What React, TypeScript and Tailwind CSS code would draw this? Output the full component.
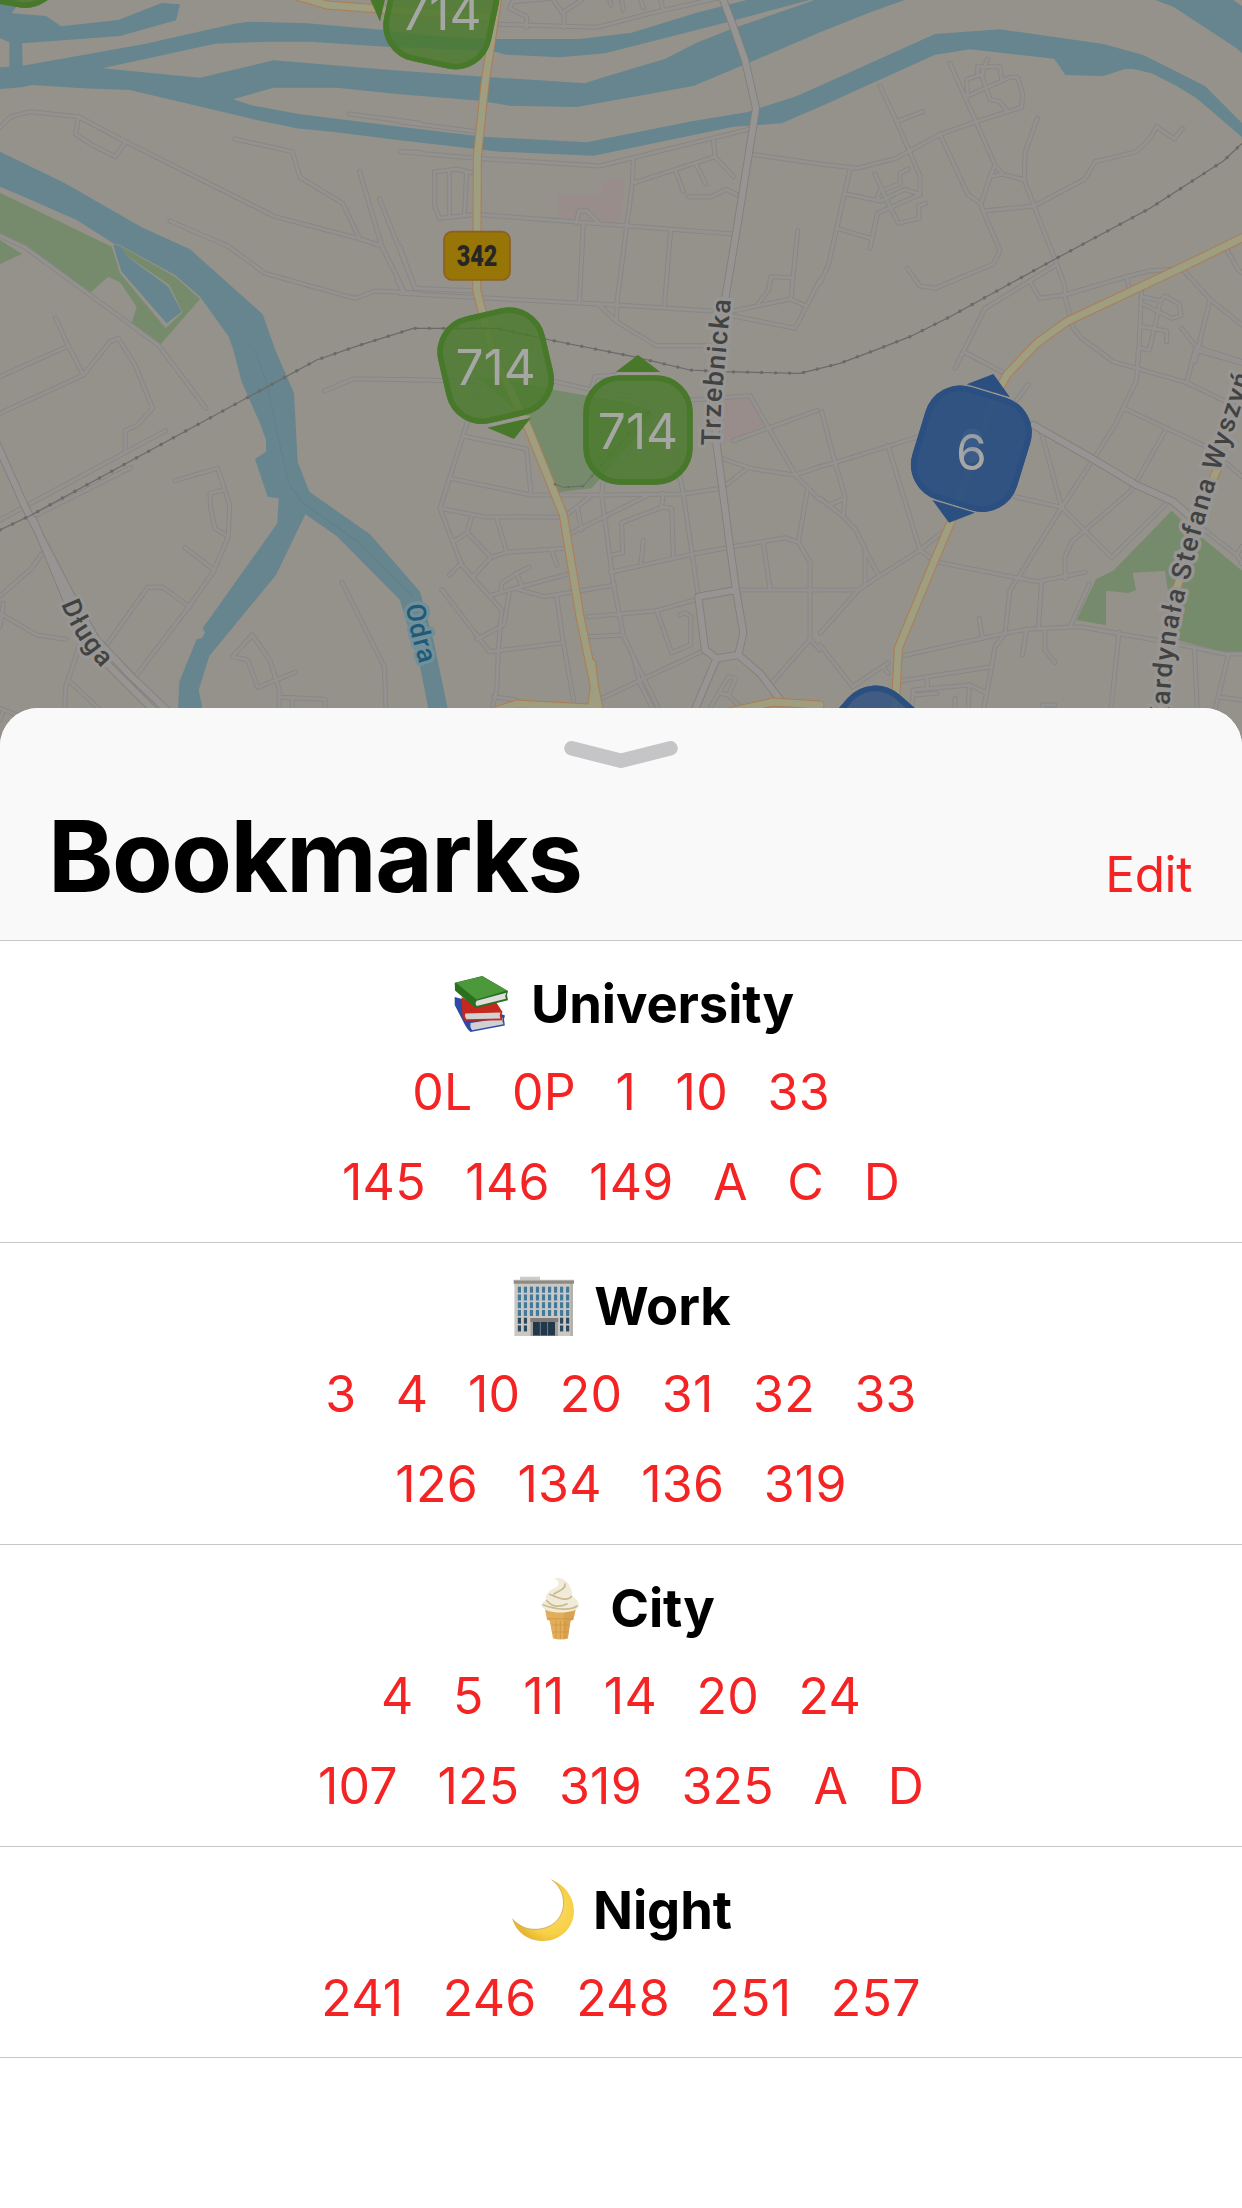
import React from "react";

/* ---------- Map data (units are thirds of a CSS pixel) ---------- */

type Tile = { at: string; roads: string[] };

const minorRoads: Tile[] = [
  {
    at: "translate(0 0)",
    roads: [
      "0,382 32,350 92,335 235,350 377,425 825,650 1075,715 1145,738 1213,875",
      "235,350 227,403 280,437 346,470 377,425",
      "704,417 877,455 900,532 1028,610 1080,718",
      "1079,515 1145,738",
      "1138,596 1245,865 1260,865",
      "510,663 683,738 795,820 1065,895 1125,873 1260,880",
      "1048,342 1260,370",
      "1204,455 1260,457",
      "-5,705 75,742 475,1035 618,1225",
      "167,955 205,1038 250,1125",
      "0,1130 205,1038",
      "0,1240 250,1125 330,1025 355,1015 405,1095 458,1225 410,1277 376,1292 376,1358",
    ],
  },
  {
    at: "translate(0 1050)",
    roads: [
      "0,510 375,308 497,242",
      "90,505 392,353",
      "525,392 653,355 689,465 685,560 640,665 567,770 410,975",
      "672,420 630,430 632,475 645,535 685,560",
      "555,593 642,660",
      "570,772 488,712 443,712 320,885",
      "973,123 1063,86 1260,90",
      "1026,697 1153,950 1158,1080",
      "837,1080 838,1020 810,932 757,855 697,920 743,930 773,1012 885,967",
      "840,1042 975,1048 975,1080",
      "877,1042 877,1090",
      "0,738 95,655 125,612",
      "0,830 10,760",
      "5,793 110,855 197,868",
      "240,880 218,950 197,1010 193,1080",
      "205,990 300,1080",
      "0,1075 50,1095",
      "0,1110 10,1080",
    ],
  },
  {
    at: "translate(1200 0)",
    roads: [
      "300,73 590,82 760,38 950,-5",
      "380,82 380,50 328,25 338,5 455,-5",
      "460,0 492,45 492,82",
      "492,35 545,0",
      "628,-5 633,15",
      "665,0 670,30",
      "722,0 730,22",
      "782,0 788,25",
      "0,365 230,395",
      "0,455 230,475 600,498 700,473 1045,388",
      "700,473 697,550 680,678 650,915 650,960",
      "697,550 945,470 940,420",
      "945,470 1000,530",
      "888,492 917,552",
      "827,513 850,575",
      "865,590 935,590 978,568 1012,585",
      "1055,463 1260,492",
      "104,515 150,510 170,507 230,522",
      "104,515 104,618 118,655 230,643 1000,702",
      "148,512 148,650",
      "200,518 193,645",
      "528,672 537,632 560,632 595,668",
      "550,670 538,908",
      "812,690 793,920",
      "0,740 45,865 225,873",
      "0,880 650,915 935,933",
      "-10,840 12,880",
      "592,910 650,965 768,1037 960,1037",
      "990,935 1172,897 1218,918",
      "1193,692 1173,895",
      "1178,833 1113,830 1105,872 1075,910",
      "985,945 1185,985 1260,840",
    ],
  },
  {
    at: "translate(2460 0)",
    roads: [
      "180,258 230,365 300,528 300,583",
      "230,365 308,335",
      "0,492 110,505 228,475 360,403 468,365 605,322 608,280 592,232 570,232 443,288",
      "390,190 468,365 525,495 510,530 483,612",
      "443,288 440,238 490,222",
      "545,240 540,200 473,200 473,222",
      "502,178 485,225 510,298 540,305 560,332",
      "652,355 615,458 613,540 642,618 708,785 735,860 733,885 760,985 785,1015 880,1085",
      "525,495 548,522 613,540",
      "510,530 548,522",
      "360,403 443,582 483,612 490,635 540,752 520,792 345,865 300,858 262,805",
      "490,633 642,618 795,537 825,485 950,455 990,415 1010,380 1063,417 1087,385",
      "90,508 50,685 25,795 0,850",
      "78,582 182,603 255,568 300,583 172,640 150,745",
      "50,685 153,715",
      "165,522 210,620 235,670 298,655 295,618 317,610",
      "265,507 240,520 240,552 180,573 172,590 182,603",
      "708,795 495,925 415,1085",
      "630,845 660,895 733,885 920,830 990,812 1060,808",
      "920,830 927,860",
      "430,1055 490,1085",
      "1090,810 1170,898 1266,975",
      "1170,898 1125,1085",
      "1218,745 1255,810 1266,818",
      "965,865 955,1085",
      "965,890 1022,902 1035,888 1078,912 1083,947 1055,955 968,912",
      "1022,902 988,1050 960,1045",
      "965,980 1040,993 1040,1025",
      "1085,985 1128,1040 1266,1085",
    ],
  },
  {
    at: "translate(1200 1050)",
    roads: [
      "0,88 240,95",
      "240,95 120,475 185,645 305,780 295,900 290,1020 275,1080",
      "400,80 600,125 700,140 760,185",
      "575,115 585,80 650,75",
      "190,258 380,297 393,435",
      "150,385 393,435 605,435 850,432 965,415",
      "120,475 250,500 490,502",
      "215,500 202,548 160,575",
      "202,548 273,622 320,607 290,505",
      "273,622 217,682",
      "320,607 500,595",
      "455,600 470,645",
      "148,675 185,638",
      "270,737 345,715 512,670",
      "303,720 305,700 350,670 388,652",
      "350,670 367,710",
      "345,715 432,740 645,705",
      "328,728 312,825 230,868",
      "125,718 268,905 490,878",
      "470,740 490,878 525,1075",
      "512,550 745,435",
      "500,495 570,440",
      "532,475 545,540",
      "610,390 605,435 640,700 670,855 700,920 780,1085",
      "565,800 770,782 900,745",
      "570,860 670,855",
      "635,615 668,608 665,518 785,472 815,475 820,620",
      "785,472 790,430",
      "632,667 875,613 990,592 1155,563 1195,577 1230,635 1230,868 1110,1005",
      "723,640 730,570",
      "815,260 850,432 895,740",
      "770,782 815,908 872,885 872,800 855,788 840,795",
      "605,1045 915,900",
      "700,920 720,1000 760,1080",
      "280,1040 350,1050",
      "965,325 1060,357 1185,375 1260,350",
      "1050,137 1190,380 1260,450",
      "1000,272 1250,182",
      "640,360 760,200 800,155 1050,137",
      "965,415 1040,357",
      "1222,420 1195,577",
      "1090,577 1110,718",
      "1010,720 1260,720",
      "1230,868 1260,900",
      "930,1075 985,980 1008,985 985,1035 960,1030",
      "985,1035 1030,1080",
    ],
  },
  {
    at: "translate(2460 1050)",
    roads: [
      "0,350 45,338 290,262",
      "5,185 45,338 75,440 70,500",
      "0,445 70,500 105,537 135,595 135,705",
      "75,445 28,465",
      "0,720 115,720 175,680 300,600 365,548",
      "135,600 175,675",
      "115,720 0,850",
      "203,285 300,600 345,635 650,695 795,667",
      "430,5 405,55",
      "430,5 545,65",
      "625,103 590,150",
      "585,440 725,472 875,622 1040,460",
      "665,250 725,472 820,328 885,225 950,90 955,0",
      "725,472 590,690 570,720 555,850",
      "820,-10 880,35 1100,98 1240,165",
      "1100,98 1125,0 1266,40",
      "912,175 1040,235 945,403 930,425 755,575 735,620 735,685",
      "1040,235 1170,295",
      "665,695 655,835",
      "808,702 750,830",
      "245,918 555,850 620,838 780,830 1060,880 1215,912 1266,912",
      "478,805 487,865",
      "620,838 607,915",
      "675,838 675,900 705,938",
      "555,850 525,890 515,950 490,1080",
      "245,992 515,950",
      "322,985 322,1012",
      "275,1080 280,1020 450,1005 500,1030",
      "280,1035 350,1030",
      "448,1005 445,1080",
      "405,1045 405,1080",
      "897,845 873,1080",
      "1123,890 1132,1080",
      "1225,915 1185,1080",
      "1200,1042 1266,1050",
      "0,885 98,1010 205,938",
      "188,950 205,970",
      "1140,530 1250,615",
      "1266,590 1250,615 1266,640",
      "665,1080 668,1065 705,1065",
      "1220,340 1266,380",
    ],
  },
];

const majorRoads = [
  "2170,0 2200,80 2235,180 2268,325 2245,470 2210,690 2175,900 2145,1200 2148,1320 2190,1640 2208,1770 2230,1898 2215,1965 2150,1975 2115,1950 2095,1790 2208,1770",
  "2150,1975 2080,2140",
  "2215,1965 2280,2020 2345,2105",
  "3100,1275 3280,1378 3405,1453 3520,1505 3600,1575",
  "-10,1330 75,1520 145,1655 215,1790 290,1920 400,2035 510,2140",
  "100,1560 200,1800 260,1925 330,2000 470,2140",
];

const yellowRoads = [
  "1495,-20 1455,250 1432,470 1430,870 1475,1050 1585,1285 1690,1545 1740,1850 1800,2140",
  "1772,2140 1783,2060 1775,1990",
  "880,-15 980,15 1180,30 1460,50",
  "3740,707 3560,795 3200,965 3110,1030 3020,1125 2980,1200 2855,1560 2800,1690 2695,1945 2685,2140",
  "1480,2135 1550,2112 1780,2125",
  "2190,2135 2320,2106 2460,2115",
  "3655,1400 3625,1470",
  "3545,1725 3520,1790",
  "3500,2000 3480,2140",
];

const waters = [
  "0,0 50,0 48,22 35,40 138,48 183,79 355,60 485,9 540,13 528,61 360,108 66,130 68,197 430,133 700,72 745,65 920,70 1150,90 1300,108 1488,117 1740,117 1895,98 2090,38 2240,0 2430,0 2175,68 1815,160 1680,172 1518,164 1485,155 1340,148 1160,140 930,125 800,125 645,131 307,205 600,233 820,181 1200,212 1450,230 1755,250 1805,233 1995,177 2090,128 2200,85 2430,5 2445,-2 2720,-2 2615,35 2460,97 2250,187 2080,258 1730,321 1530,317 1440,302 1200,283 1010,263 820,263 698,298 755,316 900,343 1200,380 1450,410 1760,427 2080,363 2240,337 2385,290 2460,257 2805,102 3000,88 3310,132 3430,165 3615,258 3726,370 3726,412 3660,355 3590,295 3530,258 3455,220 3400,207 3375,207 3310,228 3196,225 3163,176 2910,148 2805,164 2460,320 2345,370 2275,375 2200,380 1780,467 1500,455 1200,421 1010,397 890,385 770,360 390,270 250,265 95,255 65,262 0,267 0,202 28,200 28,127 0,115",
  "3460,-2 3520,20 3710,145 3726,160 3726,18 3697,-2",
  "0,455 195,550 425,682 570,748 788,943 826,1050 882,1180 893,1385 928,1475 1110,1603 1260,1775 1300,1920 1343,2125 1285,2125 1260,2000 1200,1800 1010,1608 916,1543 828,1725 628,1968 596,2070 608,2130 534,2130 538,2045 590,1918 605,1915 615,1898 608,1885 832,1570 836,1495 803,1490 765,1377 798,1355 798,1320 780,1270 725,1145 700,1050 687,1012 640,945 600,890 525,825 360,735 340,730 230,660 75,592 0,560",
  "340,733 362,738 380,768 505,860 545,935 500,970 365,815 350,770",
];

const parks = [
  "0,578 335,740 360,820 497,985 548,937 508,855 378,765 365,740 525,830 600,897 482,1033 395,970 410,922 362,848 325,830 272,877 75,742 0,705",
  "0,720 66,762 0,792",
  "1430,1130 1540,1142 1665,1170 1890,1210 1965,1240 1900,1320 1775,1465 1675,1477 1570,1250",
  "3515,1532 3560,1575 3726,1712 3726,1958 3675,1958 3525,1918 3495,1712 3398,1718 3408,1770 3385,1779 3318,1772 3318,1876 3230,1860 3288,1738 3340,1712",
];

const RAIL =
  "0,1590 90,1547 950,1080 1075,1037 1240,985 1490,985 1650,1020 1900,1070 2070,1110 2170,1115 2400,1120 2520,1090 2640,1045 2730,1010 2850,950 3160,780 3450,625 3670,483 3726,430";
const RAIL_SPUR = "1665,1453 1690,1462 1750,1458 1860,1330 1950,1232";

function RoadSet({ color, width }: { color: string; width: number }) {
  return (
    <g stroke={color} strokeWidth={width}>
      {minorRoads.map((tile) => (
        <g key={tile.at} transform={tile.at}>
          {tile.roads.map((points) => (
            <polyline key={points} points={points} />
          ))}
        </g>
      ))}
    </g>
  );
}

function Lines({ items, color, width }: { items: string[]; color: string; width: number }) {
  return (
    <g stroke={color} strokeWidth={width}>
      {items.map((points) => (
        <polyline key={points} points={points} />
      ))}
    </g>
  );
}

type MarkerProps = {
  x: number;
  y: number;
  angle: number;
  label?: string;
  baseline?: number;
  color: string;
  opacity: number;
  height?: number;
};

function Marker({ x, y, angle, label, baseline = 57, color, opacity, height = 328 }: MarkerProps) {
  return (
    <g transform={`translate(${x} ${y})`}>
      <g transform={`rotate(${angle})`}>
        <rect x={-164} y={-height / 2} width={328} height={height} rx={110} fill={color} fillOpacity={opacity} />
        <rect
          x={-155.5}
          y={-height / 2 + 8.5}
          width={311}
          height={height - 17}
          rx={101}
          fill="none"
          stroke={color}
          strokeWidth={17}
        />
      </g>
      {label && (
        <text y={baseline} textAnchor="middle" fontSize={149} fill="#a6a7a5" fontFamily="Inter, sans-serif">
          {label}
        </text>
      )}
    </g>
  );
}

const GREEN = "#48792a";
const BLUE = "#2a4f80";

function CityMap() {
  const halo = { paintOrder: "stroke" as const, strokeLinejoin: "round" as const };
  return (
    <svg viewBox="0 0 3726 2280" className="block h-[760px] w-full shrink-0" aria-label="Map">
      <defs>
        <path id="dluga" d="M184,1812 Q228,1935 345,2045" />
        <path id="odra" d="M1218,1816 Q1228,1900 1268,2020" />
        <path id="trzebnicka" d="M2160,1337 L2164,1200 L2190,930 L2200,830" />
        <path id="wyszynskiego" d="M3505,2172 L3512,2060 Q3526,1870 3568,1735 Q3600,1600 3645,1455 L3740,1170 L3830,900" />
      </defs>
      <rect width={3726} height={2280} fill="#94928b" />
      {parks.map((p) => (
        <polygon key={p} points={p} fill="#768b6c" />
      ))}
      <polygon points="1675,587 1805,587 1805,541 1875,541 1861,667 1670,653" fill="#988d8a" />
      <polygon points="2175,1200 2250,1195 2298,1272 2160,1340" fill="#988d8a" />
      {waters.map((p) => (
        <polygon key={p} points={p} fill="#66858f" />
      ))}
      <polyline
        points="765,1050 800,1150 865,1450 910,1510 1080,1630 1240,1790"
        fill="none"
        stroke="#61818c"
        strokeWidth={4}
      />
      <g fill="none" strokeLinecap="round" strokeLinejoin="round">
        <RoadSet color="#898782" width={15} />
        <RoadSet color="#949291" width={9} />
        <Lines items={majorRoads} color="#837d76" width={24} />
        <Lines items={majorRoads} color="#969594" width={19} />
        <Lines items={yellowRoads} color="#ab7d54" width={27} />
        <Lines items={yellowRoads} color="#9f9e81" width={21} />
        <g stroke="#6b6a69">
          <polyline points={RAIL} strokeWidth={3.5} />
          <polyline points={RAIL} strokeWidth={10} strokeDasharray="0.1 42" />
          <polyline points={RAIL_SPUR} strokeWidth={3} />
          <polyline points={RAIL_SPUR} strokeWidth={8} strokeDasharray="0.1 42" />
        </g>
      </g>

      <g
        fontFamily="Roboto, sans-serif"
        fontWeight={500}
        fontSize={80}
        fill="#424241"
        stroke="#989694"
        strokeWidth={20}
        style={halo}
      >
        <text letterSpacing={5}>
          <textPath href="#dluga">Długa</textPath>
        </text>
        <text letterSpacing={5}>
          <textPath href="#trzebnicka">Trzebnicka</textPath>
        </text>
        <text letterSpacing={5.5}>
          <textPath href="#wyszynskiego">Kardynała Stefana Wyszyń</textPath>
        </text>
        <text fill="#205a78" stroke="#71909a" letterSpacing={4}>
          <textPath href="#odra">Odra</textPath>
        </text>
      </g>

      <rect x={1332} y={695} width={198} height={145} rx={24} fill="#977507" stroke="#8c6022" strokeWidth={5} />
      <text
        x={1370}
        y={798}
        fontFamily="Roboto, sans-serif"
        fontWeight={900}
        fontSize={89}
        fill="#262624"
        textLength={122}
        lengthAdjust="spacingAndGlyphs"
      >
        342
      </text>

      <g fill={GREEN}>
        <polygon points="1085,-60 1140,65 1168,-60" />
        <polygon points="1462,1283 1593,1253 1542,1317" />
        <polygon points="1847,1116 1914,1065 1981,1116" />
      </g>
      <g fill={BLUE}>
        <polygon points="2900,1153 2980,1122 3030,1192" />
        <polygon points="2797,1500 2925,1538 2847,1568" />
      </g>
      <g fill="none" stroke="#9a9896" strokeWidth={6}>
        <line x1={1475} y1={1275} x2={1588} y2={1249} />
        <line x1={1850} y1={1121} x2={1978} y2={1121} />
        <line x1={2905} y1={1159} x2={3022} y2={1195} />
        <line x1={2805} y1={1496} x2={2915} y2={1530} />
      </g>
      <Marker x={31} y={-149} angle={10} color={GREEN} opacity={0.8} />
      <Marker x={1324} y={34} angle={12} label="714" color={GREEN} opacity={0.8} />
      <Marker x={1487} y={1097} angle={-13} label="714" color={GREEN} opacity={0.8} />
      <Marker x={1914} y={1290} angle={0} label="714" color={GREEN} opacity={0.8} />
      <circle cx={2916} cy={1316} r={31} fill="#5d7ba2" />
      <Marker x={2914} y={1346} angle={17} label="6" baseline={63} color={BLUE} opacity={0.93} height={353} />
      <circle cx={2916} cy={1316} r={31} fill="#5d7ba2" fillOpacity={0.2} />
      <circle cx={2914} cy={1365} r={25} fill="#5d7ba2" fillOpacity={0.2} />
      <Marker x={2631} y={2243} angle={41} color={BLUE} opacity={0.8} />
    </svg>
  );
}

/* ---------- Section icons ---------- */

function Books() {
  return (
    <svg viewBox="0 0 66 66" className="size-[66px]">
      <path d="M6.7 26 L14 28 L57 44.500 L56 48 L56.800 54.500 L22.500 61 Q19 58 17 54 L6.700 34Z" fill="#2b4ba5" />
      <path d="M22.500 52 L55 47 Q53.500 50 55.500 53.300 L24 59.300 Q21.500 55.500 22.500 52Z" fill="#d0d0d3" />
      <path d="M13.600 26 L27 34 L48 31 L54.500 41 L53.500 43.500 L54.500 49.300 L17 50 L14.500 46Z" fill="#c4281f" />
      <path d="M17.500 42.500 L52.500 41.500 Q51 44.500 52.500 47.500 L18.500 48.200 Q16 45 17.500 42.500Z" fill="#d2d2d2" />
      <path d="M6.700 11.700 L34.300 5 L60 20 L59 24 L60 29.200 L28 37 L25.500 35.500 L7 19.500Z" fill="#2a701f" />
      <path d="M8 11.800 L34.300 5.300 L59 19.600 L28.500 28.500Z" fill="#4c993b" />
      <path d="M28.800 29.800 L58.300 21.700 Q56.500 24.500 58 27.700 L28.800 35 Q26.500 32.500 28.800 29.800Z" fill="#dedede" />
    </svg>
  );
}

function Office() {
  const columns = [0, 1, 2, 3, 4, 5, 6, 7, 8];
  const rows = [0, 1, 2, 3, 4, 5];
  return (
    <svg viewBox="0 0 66 66" className="size-[66px]">
      <rect x="9" y="3.700" width="20" height="4" fill="#cfccc8" />
      <rect x="3.400" y="9" width="58.400" height="54" fill="#cbc7c2" />
      <rect x="59.500" y="11" width="2.300" height="52" fill="#b1aeaa" />
      <rect x="2.700" y="7" width="60.300" height="3.800" rx="0.500" fill="#8f8a86" />
      <rect x="2.700" y="6.800" width="60.300" height="1" fill="#b5b1ad" />
      {rows.map((r) =>
        columns.map((c) =>
          r > 3 && c > 1 && c < 7 ? null : (
            <rect
              key={`${r}-${c}`}
              x={6.8 + c * 6.03}
              y={13.7 + r * 7.75}
              width="3.200"
              height="6"
              fill={r > 3 ? "#2b4a5e" : "#43799a"}
            />
          ),
        ),
      )}
      <rect x="19.500" y="49" width="27.500" height="14" fill="#a39f9b" />
      <rect x="19.300" y="45" width="28" height="4" fill="#827b77" />
      <rect x="22" y="49" width="22" height="13.500" fill="#20384a" />
      <path d="M29.300 49V62.500M36.600 49V62.500" stroke="#8494a0" strokeWidth="0.800" />
    </svg>
  );
}

function IceCream() {
  return (
    <svg viewBox="0 0 66 66" className="size-[66px]">
      <path d="M18 34 H48.800 L46.300 44.500 L43.500 46 L40.800 63.500 Q33.300 65.500 26 63.500 L22.700 46 L20 44.500Z" fill="#e3ae5c" />
      <path
        d="M20 43.800 H46.500 M25 50 H42 M25.500 57 H41.500 M29 46 V63 M33.400 46 V64 M38 46 V63"
        stroke="#cd9443"
        strokeWidth="0.800"
        fill="none"
      />
      <path d="M37 36 H48.500 L46.300 44.500 L43.500 46 L40.800 63.500 L36 64.500Z" fill="#cf9745" opacity="0.500" />
      <path
        d="M27 3.400 C36 1.500 42 7 44.800 16 C45.500 18.500 45 20 44.500 21.500 C49 22.500 51.500 26 52 31.500 C50 36 40 37.500 33 37.500 C24 37.500 15.500 35.500 14.400 30 C14.500 27.500 16.500 26.500 19.500 25.500 C17 20 22 15.500 28 13 C33 10 33 5.500 27 3.400Z"
        fill="#f1ebda"
      />
      <path
        d="M38 9 C39 14 32 16 27 19 M44.500 21.500 C40 27 31 23 23 19.500 M19.500 25.500 C24 31 31 33 40 29 M50 31 C44 35.500 30 35 16.500 30"
        fill="none"
        stroke="#cbbb92"
        strokeWidth="1.700"
        strokeLinecap="round"
      />
    </svg>
  );
}

function Moon() {
  return (
    <svg viewBox="0 0 66 66" className="size-[66px]">
      <defs>
        <radialGradient id="moonShade" cx="0.620" cy="0.500" r="0.560">
          <stop offset="0" stopColor="#f9dc6a" />
          <stop offset="0.700" stopColor="#f7d046" />
          <stop offset="1" stopColor="#e6b730" />
        </radialGradient>
      </defs>
      <path
        d="M41.600 2.700 C55 8 64 20 64 34 C64 51 50 64 33 64 C18 64 6 55 2.400 42 C9 49 16 52.300 25 52.300 C42 52.300 53.500 41 53.500 26 C53.500 16 49 8 41.600 2.700Z"
        fill="url(#moonShade)"
      />
      <path
        d="M2.400 42 C9 49 16 52.300 25 52.300 C42 52.300 53.500 41 53.500 26 C53.500 16 49 8 41.600 2.700"
        fill="none"
        stroke="#c08c3e"
        strokeWidth="0.600"
      />
    </svg>
  );
}

/* ---------- Bookmarks sheet ---------- */

const sections = [
  {
    title: "University",
    icon: <Books />,
    rows: [
      ["0L", "0P", "1", "10", "33"],
      ["145", "146", "149", "A", "C", "D"],
    ],
  },
  {
    title: "Work",
    icon: <Office />,
    rows: [
      ["3", "4", "10", "20", "31", "32", "33"],
      ["126", "134", "136", "319"],
    ],
  },
  {
    title: "City",
    icon: <IceCream />,
    rows: [
      ["4", "5", "11", "14", "20", "24"],
      ["107", "125", "319", "325", "A", "D"],
    ],
  },
  { title: "Night", icon: <Moon />, rows: [["241", "246", "248", "251", "257"]] },
];

export default function App() {
  return (
    <div className="flex h-[2208px] w-[1242px] flex-col overflow-hidden bg-white font-['Inter',sans-serif]">
      <CityMap />
      <div className="relative -mt-[52px] flex flex-1 flex-col overflow-hidden rounded-t-[38px] bg-white">
        <header className="border-b border-[#c6c6c8] bg-[#f9f9f9]">
          <div className="flex h-[88px] justify-center pt-[32px]">
            <svg viewBox="0 0 114 28" className="h-[28px] w-[114px]">
              <path
                d="M7.500 8.300 L57 20.800 L106.500 8.300"
                fill="none"
                stroke="#c5c5c8"
                strokeWidth="14.500"
                strokeLinecap="round"
                strokeLinejoin="round"
              />
            </svg>
          </div>
          <div className="flex h-[144px] items-baseline justify-between pr-[50px] pl-[48px]">
            <h1 className="text-[99px] leading-[120px] font-bold tracking-[-1.5px] text-black">Bookmarks</h1>
            <button className="text-[49.5px] leading-[60px] tracking-[-0.4px] text-[#f52424]">Edit</button>
          </div>
        </header>
        {sections.map((section) => (
          <section key={section.title} className="border-b border-[#c6c6c8] pt-[30px] pb-[15px] last:pb-[14px]">
            <div className="mb-[10px] flex h-[66px] items-center justify-center gap-[17px]">
              {section.icon}
              <h2 className="text-[52.5px] leading-[66px] font-bold tracking-[-0.1px] text-black">{section.title}</h2>
            </div>
            {section.rows.map((row) => (
              <div
                key={row.join()}
                className="flex h-[90px] justify-center gap-[39.5px] text-[50px] leading-[90px] tracking-[0.25px] text-[#f52424]"
              >
                {row.map((line) => (
                  <span key={line}>{line}</span>
                ))}
              </div>
            ))}
          </section>
        ))}
      </div>
    </div>
  );
}
